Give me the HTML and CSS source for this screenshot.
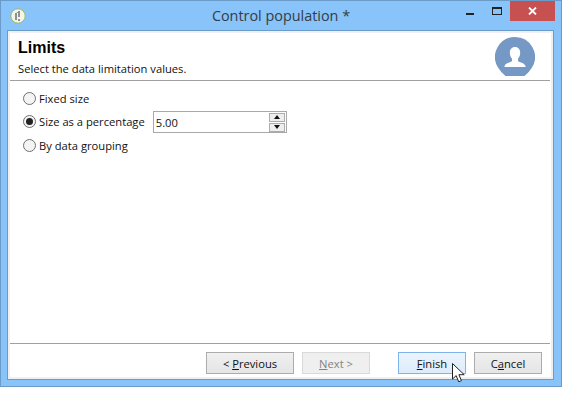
FILE: index.html
```html
<!DOCTYPE html>
<html lang="en">
<head>
    <meta charset="UTF-8">
    <title>Control population *</title>
    <link rel="stylesheet" href="styles.css">
</head>
<body>
    <div class="window">
        <div class="titlebar">
            <svg class="app-icon" width="16" height="16" viewBox="0 0 16 16">
                <circle cx="8" cy="8" r="7.2" fill="#f3f4ee" stroke="#9dbb5e" stroke-width="1"/>
                <path d="M6 5v7M9 3v6M9 11v2" stroke="#666" stroke-width="1.4" fill="none"/>
                <path d="M6.5 5l2 -1" stroke="#999" stroke-width="1" fill="none"/>
            </svg>
            <div class="title">Control population *</div>
            <div class="window-controls">
                <div class="ctl-min"><span></span></div>
                <div class="ctl-max"><span></span></div>
                <div class="ctl-close">
                    <svg width="9" height="8" viewBox="0 0 9 8"><path d="M1 0.5l7 7M8 0.5l-7 7" stroke="#fff" stroke-width="1.8"/></svg>
                </div>
            </div>
        </div>
        <div class="client">
            <div class="header">
                <div class="header-text">
                    <h1>Limits</h1>
                    <p>Select the data limitation values.</p>
                </div>
                <svg class="avatar" width="40" height="39" viewBox="0 0 40 39">
                    <path d="M20 0a20 20 0 0 1 17 30.500q-3 5 -7.500 8.500h-19q-4.500 -3.500 -7.500 -8.500a20 20 0 0 1 17 -30.500z" fill="#7598c4"/>
                    <path d="M20 10c3.300 0 5.200 2.600 5.200 5.800 0 2.600 -1 4.600 -2.200 6v2.200c1 1.300 6.500 1.800 7.500 5v1h-21v-1c1 -3.200 6.500 -3.700 7.500 -5v-2.200c-1.200 -1.400 -2.200 -3.400 -2.200 -6 0 -3.200 1.900 -5.800 5.200 -5.800z" fill="#fff"/>
                </svg>
            </div>
            <div class="options">
                <label class="option"><span class="radio"></span>Fixed size</label>
                <label class="option option-spin">
                    <span class="radio checked"></span>Size as a percentage
                    <span class="spinner">
                        <span class="spinner-value">5.00</span>
                        <span class="spin-buttons">
                            <span class="spin-btn"><i class="arrow-up"></i></span>
                            <span class="spin-btn"><i class="arrow-down"></i></span>
                        </span>
                    </span>
                </label>
                <label class="option option-last"><span class="radio"></span>By data grouping</label>
            </div>
            <div class="footer">
                <button class="btn btn-prev">&lt; <u>P</u>revious</button>
                <button class="btn btn-next" disabled><u>N</u>ext &gt;</button>
                <button class="btn btn-finish"><u>F</u>inish</button>
                <button class="btn btn-cancel">C<u>a</u>ncel</button>
            </div>
        </div>
        <svg class="cursor" width="13" height="20" viewBox="0 0 13 20">
            <path d="M0.500 0.500v15.500l3.700 -3.400 2.500 6.200 2.700 -1.100 -2.500 -6h5.300z" fill="#fff" stroke="#222" stroke-width="1"/>
        </svg>
    </div>
</body>
</html>
```

FILE: styles.css
```css
* {
    box-sizing: border-box;
}
body {
    margin: 0;
    background-color: #fff;
    font-family: "Open Sans", sans-serif;
    font-size: 11.2px;
    color: #111;
}
.window {
    position: relative;
    width: 562px;
    height: 387px;
    display: flex;
    flex-direction: column;
    padding: 0 7px 6px 0;
    background-color: #88c3f9;
    border: 1px solid #6a9bc9;
}
.titlebar {
    height: 29px;
    display: flex;
    align-items: flex-start;
    margin-right: -7px;
    position: relative;
}
.app-icon {
    margin: 7px 0 0 9px;
}
.title {
    position: absolute;
    left: 0;
    right: 0;
    top: 5px;
    text-align: center;
    font-size: 14.4px;
    color: #333d47;
}
.window-controls {
    margin-left: auto;
    display: flex;
    margin-right: 6px;
}
.ctl-min,
.ctl-max {
    width: 26px;
    height: 20px;
    position: relative;
}
.ctl-min span {
    position: absolute;
    left: 8px;
    top: 12px;
    width: 8px;
    height: 2px;
    background-color: #222;
}
.ctl-max span {
    position: absolute;
    left: 8px;
    top: 6px;
    width: 10px;
    height: 8px;
    border: 1px solid #222;
    border-top-width: 2px;
}
.ctl-close {
    width: 45px;
    height: 20px;
    background-color: #c75050;
    display: flex;
    align-items: center;
    justify-content: center;
}
.client {
    flex: 1;
    margin-left: 6px;
    display: flex;
    flex-direction: column;
    background-color: #fff;
    border: 1px solid #6a9bc9;
    box-shadow: inset 0 0 0 2px #f0f0f0;
    padding: 2px 3px 2px 2px;
}
.header {
    height: 48px;
    display: flex;
    justify-content: space-between;
    border-bottom: 1px solid #a0a0a0;
    padding: 5px 0 0 8px;
}
.header-text h1 {
    margin: 0;
    font-family: "Liberation Sans", Arial, sans-serif;
    font-size: 16px;
    line-height: 20px;
    font-weight: bold;
    color: #000;
}
.header-text p {
    margin: 3px 0 0;
    line-height: 15px;
}
.avatar {
    margin: -1px 15px 0 0;
}
.options {
    flex: 1;
    padding: 6px 0 0 13px;
    display: flex;
    flex-direction: column;
}
.option {
    display: flex;
    align-items: center;
    height: 23px;
    gap: 3px;
}
.option-last {
    margin-top: 1px;
}
.radio {
    width: 13px;
    height: 13px;
    border-radius: 50%;
    border: 1px solid #707070;
    background-color: #f4f4f4;
    display: flex;
    align-items: center;
    justify-content: center;
}
.radio.checked::after {
    content: "";
    width: 7px;
    height: 7px;
    border-radius: 50%;
    background-color: #222;
}
.spinner {
    margin: 1px 0 0 5px;
    width: 134px;
    height: 22px;
    border: 1px solid #a9a9a9;
    display: flex;
    align-items: center;
    justify-content: space-between;
    padding-left: 2px;
    background-color: #fff;
}
.spin-buttons {
    display: flex;
    flex-direction: column;
    gap: 1px;
    margin-right: 1px;
}
.spin-btn {
    width: 16px;
    height: 9px;
    border: 1px solid #acacac;
    background-color: #eee;
    display: flex;
    align-items: center;
    justify-content: center;
}
.arrow-up {
    border: 3.500px solid transparent;
    border-top: 0;
    border-bottom: 4px solid #111;
}
.arrow-down {
    border: 3.500px solid transparent;
    border-bottom: 0;
    border-top: 4px solid #111;
}
.footer {
    height: 34px;
    border-top: 1px solid #a0a0a0;
    display: flex;
    align-items: flex-start;
    padding: 8px 0 0 196px;
}
.btn {
    height: 22px;
    width: 68px;
    padding: 0;
    font-family: inherit;
    font-size: 11.2px;
    color: #111;
    border: 1px solid #acacac;
    background: linear-gradient(#f0f0f0, #e5e5e5);
}
.btn-prev {
    width: 88px;
}
.btn-next {
    margin-left: 8px;
    color: #838383;
    border-color: #d9d9d9;
    background: #efefef;
}
.btn-finish {
    margin-left: 28px;
    border-color: #7eb4ea;
    background: linear-gradient(#ecf4fc, #dcecfc);
}
.btn-cancel {
    margin-left: 8px;
}
.cursor {
    position: absolute;
    left: 451px;
    top: 362px;
}
```
